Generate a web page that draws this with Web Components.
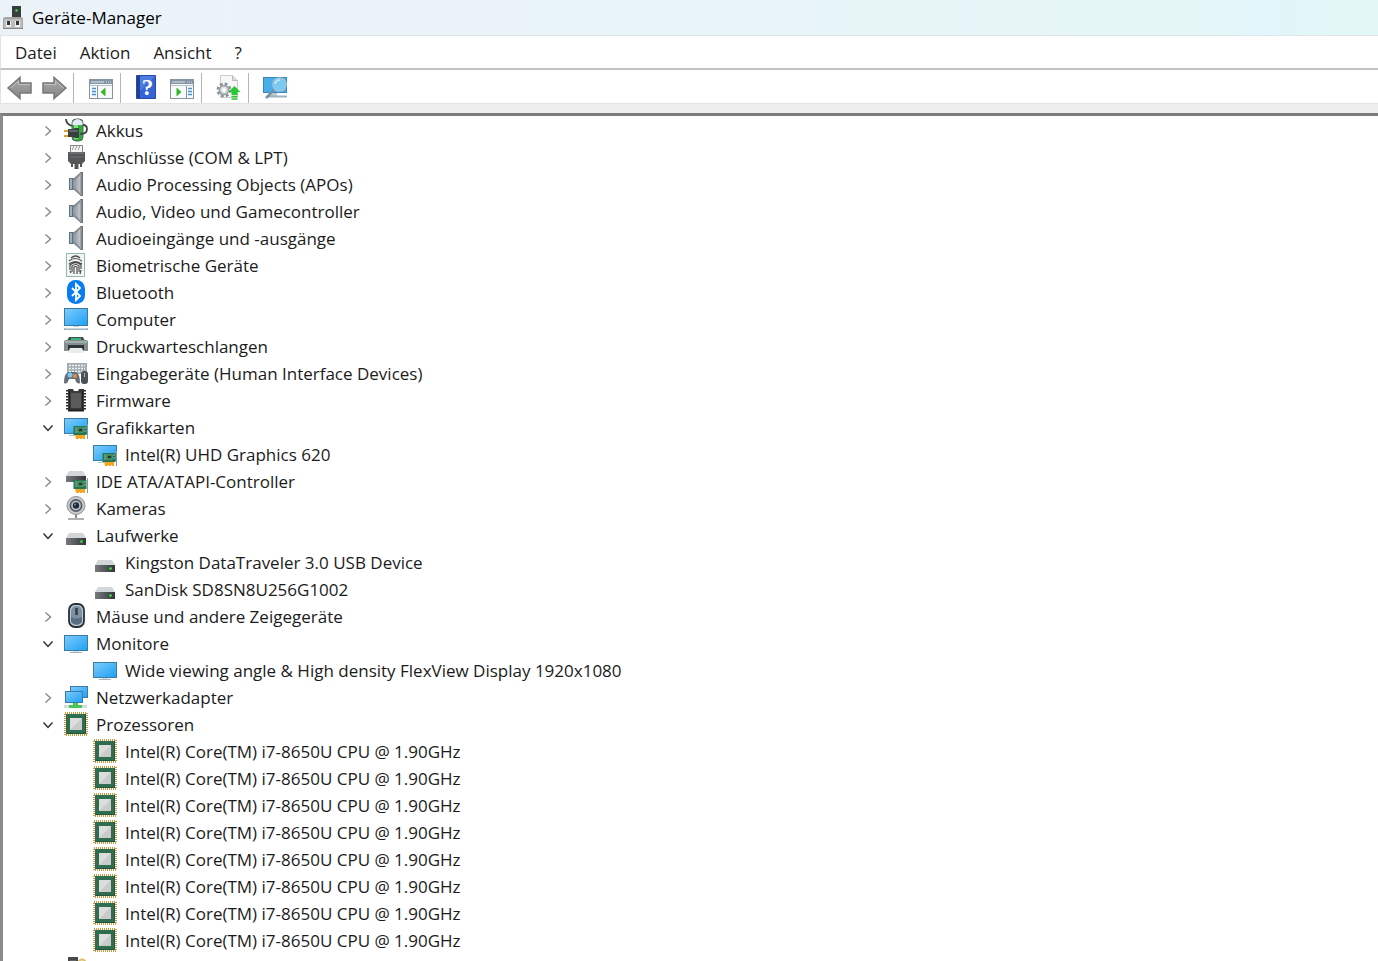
<!DOCTYPE html>
<html lang="de">
<head>
<meta charset="utf-8">
<title>Geräte-Manager</title>
<style>
  body {
    margin: 0;
    background: #fff;
    color: #1b1b1b;
    font-family: "Open Sans", "Noto Sans", sans-serif;
    font-size: 17px;
    line-height: 27px;
  }
</style>
</head>
<body>
<device-manager>
  <title-bar slot="title">Geräte-Manager</title-bar>
  <menu-bar slot="menu" items='["Datei","Aktion","Ansicht","?"]'></menu-bar>
  <tool-bar slot="tools">
    <tool-button icon="back" label="Zurück"></tool-button>
    <tool-button icon="forward" label="Vorwärts"></tool-button>
    <tool-separator></tool-separator>
    <tool-button icon="console" label="Konsolenstruktur"></tool-button>
    <tool-separator></tool-separator>
    <tool-button icon="help" label="Hilfe"></tool-button>
    <tool-button icon="actions" label="Aktionsbereich"></tool-button>
    <tool-separator></tool-separator>
    <tool-button icon="update" label="Treiber aktualisieren"></tool-button>
    <tool-separator></tool-separator>
    <tool-button icon="scan" label="Nach geänderter Hardware suchen"></tool-button>
  </tool-bar>
  <device-tree></device-tree>
</device-manager>

<script>
// Screen with a blue gradient, shared by all monitor style icons
const screen = (x, y, w, h) => `
  <rect x="${x}" y="${y}" width="${w}" height="${h}" fill="#397ba3"/>
  <rect x="${x + 1}" y="${y + 1}" width="${w - 2}" height="${h - 2}" fill="url(#blue)"/>`;

const card = `
  <path d="M11 19h10v5h-2v-1h-1v1h-2v-1h-1v1h-3z" fill="#f5a51d"/>
  <rect x="9.500" y="11" width="13" height="9" fill="#267553"/>
  <path d="M23.500 9v15" stroke="#8d9799"/>
  <path d="M11 13h2M11 15h2M11 17h2M20 13h2M20 16h2" stroke="#91bd91"/>
  <rect x="14" y="13" width="5" height="4" fill="#173f33" stroke="#68ad7c"/>`;

const panel = `
  <rect x="1.500" y="4.500" width="23" height="19" fill="#f7f9fb" stroke="#87939d"/>
  <path d="M2 5h22v4H2z" fill="#8493a3"/>
  <path d="M3 7h13M18 7h1M20 7h1M22 7h1" stroke="#dce5eb"/>
  <path d="M2 10.500h22" stroke="#b6c0c8"/>`;

const ICONS = {
  app: `<rect x="9" y="0" width="9" height="14" fill="#393d3e"/><circle cx="13.500" cy="4.500" r="1.200" fill="#32e642"/>
    <path d="M0 12l2-1h16l2 1v11H0z" fill="#a4a4a4"/><path d="M1 13h18v9H1z" fill="#bebebe"/>
    <path d="M0 22.500h20" stroke="#858585"/><path d="M3 15h5v6H3zM12 15h5v6h-5z" fill="#eee"/><path d="M4 15h3v4H4zM13 15h3v4h-3z" fill="#333"/>`,
  battery: `<rect x="8" y="1" width="11" height="22" rx="4" fill="#2fae3c" stroke="#596162"/>
    <path d="M8.500 7V4q5-6 10 0v3z" fill="#e7e9fa"/><path d="M10 7h4v14h-4z" fill="#7fe377"/>
    <path d="M2 1q0 5 6 7M19 7q4 0 4 4 0 5-7 5" fill="none" stroke="#424849" stroke-width="1.800"/>
    <path d="M0 13h5M0 18h5" stroke="#d3a429" stroke-width="1.800"/><path d="M4 11h5l2-1h4v10h-4l-2-1H4z" fill="#3b3f40"/><path d="M5 13h9" stroke="#8b8e8f"/>`,
  port: `<rect x="6.500" y=".5" width="12" height="7" fill="#f2f2f2" stroke="#888"/><path d="M9 2h1M12 2h1M15 2h1M8 4h1M11 4h1M14 4h1" stroke="#555"/>
    <path d="M4 7h17v9l-3 3H7l-3-3z" fill="#545759"/><path d="M5 8h15" stroke="#84888a"/><path d="M6 12h13" stroke="#6c7072"/>
    <path d="M8 19v3M17 19v3" stroke="#555" stroke-width="2"/><path d="M12.500 18v6" stroke="#555" stroke-width="4"/>`,
  speaker: `<rect x="5" y="6" width="5" height="12" fill="#5d7280"/><path d="M6 7h2v10H6z" fill="#9fb3be"/>
    <path d="M9 7l8-7v24L9 17z" fill="url(#silver)"/><path d="M9 7l8-7v2L10 9zM9 17l8 7v-2l-7-7z" fill="#858c92"/>
    <path d="M16.500 0H19v24h-2.500z" fill="#6b737a"/><path d="M17 1v22" stroke="#a2a9ae"/>`,
  finger: `<rect x="2.500" y=".5" width="18" height="23" fill="#f2f7f5" stroke="#91b9ad"/>
    <g fill="none" stroke="#4c4c4c" stroke-width="1.200"><path d="M7 5q5-4 9 0M5 8q6-5 13 0M5 11q6-5 13 0M6 17v-5q6-5 11 0v4M8 19v-6q4-3 7 0v6M10 21v-7q2-1 3 0v7M6 18l1 2M17 17l-1 4"/></g>`,
  bluetooth: `<rect x="3" y="0" width="18" height="24" rx="8.500" fill="#087cf0"/>
    <path d="M8 8l8 8-4 4V4l4 4-8 8" fill="none" stroke="#fff" stroke-width="1.800"/>`,
  computer: `${screen(0, 1, 24, 18)}<path d="M9 19h6v1H9z" fill="#c9d5dc"/><path d="M0 21h24v2H0z" fill="#9fb2be"/><path d="M1 21.500h22" stroke="#cbd7de"/>`,
  printer: `<path d="M5 3h14l2 4H3z" fill="#444a4d"/><path d="M7 4h10v3H7z" fill="#31b777"/>
    <path d="M0 7l2-1h20l2 1v10H0z" fill="#848d90"/><path d="M1 8h22" stroke="#c4cbcd"/><path d="M4 11h16v5H4z" fill="#303538"/>
    <path d="M6 14h12l2 5H4z" fill="#e9eceb"/><path d="M20 9h2" stroke="#3ceb62"/>`,
  hid: `<rect x="3" y="2" width="20" height="11" fill="#a5adb2"/><path d="M5 4.500h16M5 7.500h16M5 10.500h16" stroke="#f0f3f5" stroke-width="1.500" stroke-dasharray="2 1"/>
    <path d="M0 22q0-9 4-11h8q4 2 4 11-3 2-5-4H5q-2 6-5 4z" fill="#656f78"/><circle cx="6" cy="14" r="2.500" fill="#73c9fc"/><circle cx="11" cy="15" r="2" fill="#f28b43"/>
    <rect x="17" y="10" width="7" height="13" rx="3" fill="#4a525a"/><path d="M20.500 12v4" stroke="#adb6bc"/>`,
  firmware: `<path d="M4 1h5l1 2h4l1-2h5v22H4z" fill="#3a3a3a"/><path d="M7 5h10v15H7z" fill="#5a5a5a"/>
    <path d="M3 2v21M21 2v21" stroke="#252525" stroke-width="2" stroke-dasharray="1.500 1.500"/><path d="M5.500 2v20M18.500 2v20" stroke="#222"/><path d="M4 22.500h16" stroke="#222" stroke-width="2"/>`,
  graphics: `${screen(0, 3, 24, 16)}<path d="M5 20h6v1H5z" fill="#afc4d1"/>${card}`,
  ide: `<path d="M5 2h14l3 5H2z" fill="#d3d6d9"/><path d="M2 7h20v6H2z" fill="url(#dark)"/>${card}`,
  camera: `<circle cx="12" cy="9.500" r="9" fill="#c8cacc" stroke="#8e9295"/><circle cx="12" cy="9.500" r="6.500" fill="#565e64"/>
    <circle cx="12" cy="9.500" r="4.800" fill="#b8c4ce"/><circle cx="12" cy="9.500" r="3.200" fill="#252c35"/><circle cx="11" cy="8.500" r="1" fill="#6793bc"/>
    <path d="M11 19h2v3h-2z" fill="#888"/><path d="M4 23h16" stroke="#999" stroke-width="1.500"/>`,
  drive: `<path d="M5 10h14l3 5H2z" fill="#d3d6d9"/><rect x="2" y="15" width="20" height="7" fill="url(#dark)"/>
    <circle cx="17.500" cy="18.500" r="1.300" fill="#35ef35"/>`,
  mouse: `<rect x="5" y="0" width="15" height="23" rx="6" fill="#b9c9d6" stroke="#292f36" stroke-width="1.800"/>
    <rect x="7" y="2" width="11" height="19" rx="5" fill="#7c90a3"/><path d="M7 13q5 3 11 0v5q-5 5-11 0z" fill="#596d80"/><path d="M12.500 4v7" stroke="#333a42" stroke-width="2.500"/>`,
  monitor: `${screen(0, 4, 24, 16)}<path d="M9 20h6v1H9z" fill="#d4dde2"/><path d="M6 21.500h12" stroke="#a3b6c2"/>`,
  network: `${screen(6, 1, 18, 12)}${screen(1, 6, 18, 12)}
    <path d="M0 20h23v3H0z" fill="#d8dbdc"/><path d="M9 18h5v2h4v3H5v-3h4z" fill="#48c957"/>`,
  cpu: `<rect x="1" y="1" width="22" height="22" fill="none" stroke="#c99b43" stroke-width="2" stroke-dasharray="1 1"/>
    <rect x="2" y="2" width="20" height="20" fill="#2e6d50"/><path d="M2 21.500h20M21.500 2v20" stroke="#24553f"/>
    <rect x="6" y="6" width="12" height="12" fill="#ddd"/><path d="M18 6v12H6z" fill="#cbcbcb"/>`,
  security: `<rect x="4" y="2" width="10" height="21" fill="#45494b"/><path d="M6 5h6v5H6z" fill="#666"/>
    <circle cx="18" cy="8" r="3.500" fill="none" stroke="#dec067" stroke-width="2"/><path d="M18 12v10" stroke="#dec067" stroke-width="2"/>`,

  // toolbar icons, drawn on a 26px grid
  back: `<path d="M1 13L13 2.500V8h11v10H13v5.500z" fill="url(#arrow)" stroke="#777" stroke-width="1.500"/><path d="M3.500 13L11.500 6v3.500H23" fill="none" stroke="#c2c2c2"/>`,
  forward: `<path d="M25 13L13 2.500V8H2v10h11v5.500z" fill="url(#arrow)" stroke="#777" stroke-width="1.500"/><path d="M3 9.500h11.500V6l8 7" fill="none" stroke="#c2c2c2"/>`,
  console: `${panel}<path d="M9.500 11v12" stroke="#8995a0"/><path d="M4 13.500h4M4 16.500h4M4 19.500h4" stroke="#468fd0" stroke-width="1.500"/><path d="M17.500 12.500v9l-5-4.500z" fill="#36b52a"/>`,
  actions: `${panel}<path d="M17.500 11v12" stroke="#8995a0"/><path d="M19 13.500h4M19 16.500h4M19 19.500h4" stroke="#468fd0" stroke-width="1.500"/><path d="M7.500 12.500v9l5-4.500z" fill="#36b52a"/>`,
  help: `<path d="M1.500 .5h19v23h-19z" fill="#3465d2" stroke="#2949a8"/><path d="M2 1h3v22H2z" fill="#243f96"/><path d="M5 1h15L5 16z" fill="#4c7cdf"/>
    <text x="12.500" y="20" text-anchor="middle" font-family="Liberation Serif, serif" font-size="23" font-weight="bold" fill="#fff">?</text>`,
  update: `<path d="M4.500 .5h12l5 5v17h-17z" fill="#f7f7f7" stroke="#ccc"/><path d="M16.500 .5v5h5" fill="#ddd" stroke="#bbb"/>
    <circle cx="8" cy="15" r="6" fill="none" stroke="#8c969c" stroke-width="3" stroke-dasharray="2.700 2"/><circle cx="8" cy="15" r="4.500" fill="#ddd" stroke="#949da2" stroke-width="1.500"/><circle cx="8" cy="15" r="2" fill="#fff"/>
    <path d="M18.500 11l6 6h-3v3h-6v-3h-3z" fill="#28c735"/><path d="M15.500 21.500h6M15.500 24h6" stroke="#28c735" stroke-width="1.500"/>`,
  scan: `<path d="M0 2h24v16H0z" fill="#3688bb"/><path d="M1 3h22v14H1z" fill="#49aee9"/><path d="M8 18h6v3H8z" fill="#bccbd3"/><path d="M4 21.500h20" stroke="#9db3bf" stroke-width="2"/>
    <path d="M11 15l-8 8" stroke="#7892a3" stroke-width="2.500"/><circle cx="16.500" cy="9.500" r="6.500" fill="#79c9f1" stroke="#a2c4d8" stroke-width="1.500"/><path d="M12 9q1-4 5-4" fill="none" stroke="#ccecfb" stroke-width="1.500"/>`
};

const DEFS = `
  <defs>
    <linearGradient id="blue" x2="1" y2="1"><stop stop-color="#7bcbfa"/><stop offset="1" stop-color="#20a1f5"/></linearGradient>
    <linearGradient id="dark"><stop stop-color="#777b7e"/><stop offset="1" stop-color="#333638"/></linearGradient>
    <linearGradient id="silver"><stop stop-color="#8b9299"/><stop offset="1" stop-color="#c8cdd1"/></linearGradient>
    <linearGradient id="arrow" x2="0" y2="1"><stop stop-color="#aaa"/><stop offset="1" stop-color="#858585"/></linearGradient>
  </defs>`;

const DEVICES = [
  { icon: "battery", label: "Akkus" },
  { icon: "port", label: "Anschlüsse (COM & LPT)" },
  { icon: "speaker", label: "Audio Processing Objects (APOs)" },
  { icon: "speaker", label: "Audio, Video und Gamecontroller" },
  { icon: "speaker", label: "Audioeingänge und -ausgänge" },
  { icon: "finger", label: "Biometrische Geräte" },
  { icon: "bluetooth", label: "Bluetooth" },
  { icon: "computer", label: "Computer" },
  { icon: "printer", label: "Druckwarteschlangen" },
  { icon: "hid", label: "Eingabegeräte (Human Interface Devices)" },
  { icon: "firmware", label: "Firmware" },
  { icon: "graphics", label: "Grafikkarten", children: ["Intel(R) UHD Graphics 620"] },
  { icon: "ide", label: "IDE ATA/ATAPI-Controller" },
  { icon: "camera", label: "Kameras" },
  { icon: "drive", label: "Laufwerke", children: ["Kingston DataTraveler 3.0 USB Device", "SanDisk SD8SN8U256G1002"] },
  { icon: "mouse", label: "Mäuse und andere Zeigegeräte" },
  { icon: "monitor", label: "Monitore", children: ["Wide viewing angle & High density FlexView Display 1920x1080"] },
  { icon: "network", label: "Netzwerkadapter" },
  { icon: "cpu", label: "Prozessoren", children: Array(8).fill("Intel(R) Core(TM) i7-8650U CPU @ 1.90GHz") },
  { icon: "security", label: "Sicherheitsgeräte" }
];

class DeviceIcon extends HTMLElement {
  constructor() {
    super();
    this.attachShadow({ mode: "open" });
  }

  connectedCallback() {
    const size = this.getAttribute("size") || 24;
    this.shadowRoot.innerHTML = `
      <style>
        :host { display: block; flex: none; }
        svg { display: block; overflow: visible; }
      </style>
      <svg width="${size}" height="${size}" viewBox="0 0 ${size} ${size}" aria-hidden="true">${DEFS}${ICONS[this.getAttribute("name")]}</svg>
    `;
  }
}

class DeviceManager extends HTMLElement {
  constructor() {
    super();
    this.attachShadow({ mode: "open" });
    this.shadowRoot.innerHTML = `
      <style>
        :host {
          display: flex;
          flex-direction: column;
          height: 100vh;
          overflow: hidden;
        }
        main {
          flex: 1;
          min-height: 0;
          overflow: hidden;
          border-top: 3px solid #7c7c7c;
          border-left: 3px solid #8b8b8b;
        }
      </style>
      <slot name="title"></slot>
      <slot name="menu"></slot>
      <slot name="tools"></slot>
      <main><slot></slot></main>
    `;
  }
}

class TitleBar extends HTMLElement {
  constructor() {
    super();
    this.attachShadow({ mode: "open" });
    this.shadowRoot.innerHTML = `
      <style>
        :host {
          display: block;
          background: linear-gradient(90deg, #ebf3f8, #e9f4f8 50%, #e4f6f6 86%, #e2f5fb 92%, #e1f7f5 97%);
          border-bottom: 1px solid #e0e7ea;
        }
        header {
          display: flex;
          align-items: center;
          gap: 5px;
          height: 35px;
          padding-left: 3px;
          color: #000;
        }
      </style>
      <header><device-icon name="app"></device-icon><slot></slot></header>
    `;
  }
}

class MenuBar extends HTMLElement {
  constructor() {
    super();
    this.attachShadow({ mode: "open" });
    this.shadowRoot.innerHTML = `
      <style>
        :host {
          display: block;
          border-bottom: 2px solid #bfc2c4;
          border-left: 1px solid #e3e3e3;
        }
        nav {
          display: flex;
          gap: 23px;
          height: 32px;
          align-items: center;
          padding-left: 14px;
        }
        button {
          padding: 0;
          border: 0;
          background: none;
          color: inherit;
          font: inherit;
        }
      </style>
      <nav></nav>
    `;
  }

  connectedCallback() {
    const nav = this.shadowRoot.querySelector("nav");
    JSON.parse(this.getAttribute("items")).forEach(item => {
      const button = document.createElement("button");
      button.textContent = item;
      nav.appendChild(button);
    });
  }
}

class ToolBar extends HTMLElement {
  constructor() {
    super();
    this.attachShadow({ mode: "open" });
    this.shadowRoot.innerHTML = `
      <style>
        :host {
          display: block;
          border-bottom: 9px solid #eee;
        }
        div {
          display: flex;
          align-items: center;
          height: 34px;
          padding: 3px 6px 0;
          box-sizing: border-box;
          border-left: 1px solid #e3e3e3;
          border-bottom: 1px solid #e3e3e3;
        }
      </style>
      <div role="toolbar"><slot></slot></div>
    `;
  }
}

class ToolButton extends HTMLElement {
  constructor() {
    super();
    this.attachShadow({ mode: "open" });
  }

  connectedCallback() {
    this.shadowRoot.innerHTML = `
      <style>
        :host { display: block; }
        :host([icon="forward"]), :host([icon="actions"]) { margin-left: 8px; }
        button { display: block; padding: 0; border: 0; background: none; }
      </style>
      <button aria-label="${this.getAttribute("label")}"><device-icon name="${this.getAttribute("icon")}" size="26"></device-icon></button>
    `;
  }
}

class ToolSeparator extends HTMLElement {
  constructor() {
    super();
    this.attachShadow({ mode: "open" });
    this.shadowRoot.innerHTML = `
      <style>
        :host {
          display: block;
          width: 1px;
          height: 30px;
          margin: 0 14px 0 6px;
          background: #b5b5b5;
        }
      </style>
    `;
  }
}

class DeviceNode extends HTMLElement {
  constructor() {
    super();
    this.attachShadow({ mode: "open" });
    this.shadowRoot.innerHTML = `
      <style>
        :host { display: block; }
        .row {
          display: flex;
          align-items: center;
          height: 27px;
          white-space: nowrap;
        }
        button {
          display: flex;
          align-items: center;
          justify-content: center;
          width: 14px;
          height: 14px;
          margin-right: 9px;
          padding: 0;
          border: 0;
          background: none;
          color: #8c8c8c;
        }
        :host([open]) button { color: #333; }
        :host([open]) button svg { transform: rotate(90deg); }
        ::slotted(device-icon) { margin: 0 8px 2px 0; }
        .children { padding-left: 29px; }
        :host(:not([open])) .children { display: none; }
      </style>
      <div class="row">
        <button aria-label="Erweitern">
          <svg width="12" height="12" viewBox="0 0 12 12" fill="none"><path d="M3.500 1.500L8.500 6l-5 4.500" stroke="currentColor" stroke-width="1.500"/></svg>
        </button>
        <slot name="icon"></slot>
        <slot name="label"></slot>
      </div>
      <div class="children"><slot></slot></div>
    `;
    this.shadowRoot.querySelector("button").addEventListener("click", () => this.toggleAttribute("open"));
  }

  connectedCallback() {
    if (this.hasAttribute("leaf")) {
      this.shadowRoot.querySelector("button").style.visibility = "hidden";
    }
  }
}

class DeviceTree extends HTMLElement {
  constructor() {
    super();
    this.attachShadow({ mode: "open" });
    this.shadowRoot.innerHTML = `
      <style>
        :host { display: block; padding: 1px 0 0 38px; }
      </style>
      <div role="tree"></div>
    `;
  }

  connectedCallback() {
    const tree = this.shadowRoot.querySelector("div");
    DEVICES.forEach(device => {
      const node = this.createNode(device.icon, device.label);
      if (device.children) {
        node.setAttribute("open", "");
        device.children.forEach(name => {
          const child = this.createNode(device.icon, name);
          child.setAttribute("leaf", "");
          node.appendChild(child);
        });
      }
      tree.appendChild(node);
    });
  }

  createNode(icon, text) {
    const node = document.createElement("device-node");
    node.setAttribute("role", "treeitem");
    const image = document.createElement("device-icon");
    image.slot = "icon";
    image.setAttribute("name", icon);
    const label = document.createElement("span");
    label.slot = "label";
    label.textContent = text;
    node.append(image, label);
    return node;
  }
}

customElements.define("device-icon", DeviceIcon);
customElements.define("device-manager", DeviceManager);
customElements.define("title-bar", TitleBar);
customElements.define("menu-bar", MenuBar);
customElements.define("tool-bar", ToolBar);
customElements.define("tool-button", ToolButton);
customElements.define("tool-separator", ToolSeparator);
customElements.define("device-node", DeviceNode);
customElements.define("device-tree", DeviceTree);
</script>
</body>
</html>
